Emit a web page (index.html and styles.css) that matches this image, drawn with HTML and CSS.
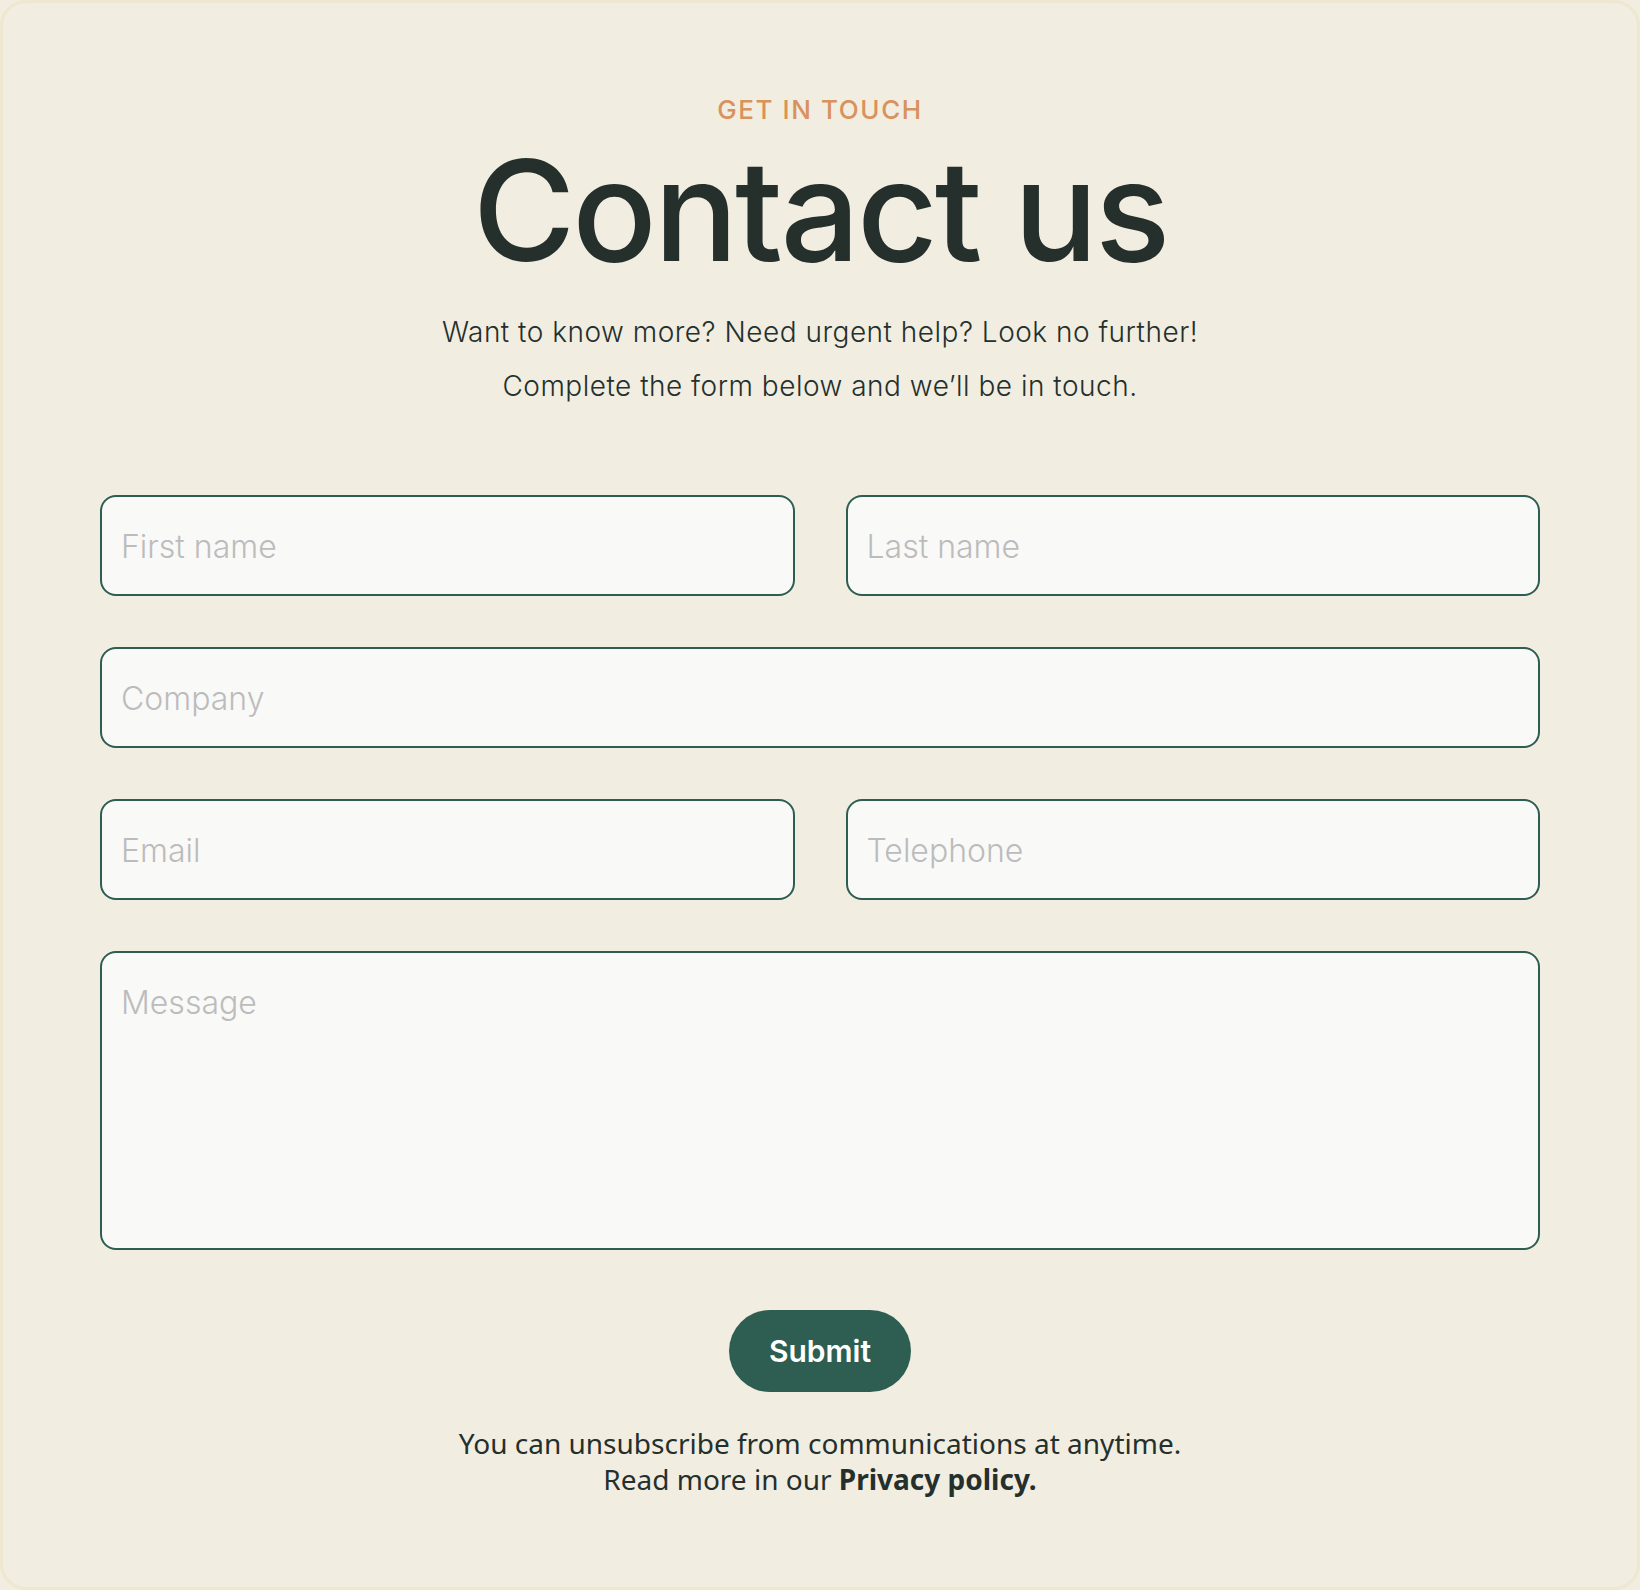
FILE: index.html
```html
<!DOCTYPE html>
<html lang="en">
<head>
<meta charset="utf-8">
<title>Contact us</title>
<link rel="stylesheet" href="styles.css">
</head>
<body>
<main class="card">
  <header class="intro">
    <p class="eyebrow">GET IN TOUCH</p>
    <h1 class="title">Contact us</h1>
    <p class="lead">Want to know more? Need urgent help? Look no further!<br>Complete the form below and we’ll be in touch.</p>
  </header>
  <form class="form">
    <div class="row two">
      <input class="field" type="text" placeholder="First name">
      <input class="field" type="text" placeholder="Last name">
    </div>
    <div class="row">
      <input class="field" type="text" placeholder="Company">
    </div>
    <div class="row two">
      <input class="field" type="email" placeholder="Email">
      <input class="field" type="tel" placeholder="Telephone">
    </div>
    <div class="row">
      <textarea class="field area" placeholder="Message"></textarea>
    </div>
    <div class="actions">
      <button class="submit" type="button">Submit</button>
    </div>
  </form>
  <p class="note">You can unsubscribe from communications at anytime.<br>Read more in our <strong>Privacy policy.</strong></p>
</main>
</body>
</html>
```

FILE: styles.css
```css
* { box-sizing: border-box; }

html, body {
  margin: 0;
  padding: 0;
  background: #f1ede1;
}

.card {
  width: 1640px;
  height: 1590px;
  background: #f1ede1;
  border: 3px solid #efe7d0;
  border-radius: 26px;
  padding: 91px 97px 0;
  display: flex;
  flex-direction: column;
  align-items: center;
  font-family: Inter, "Noto Sans", sans-serif;
  color: #25302d;
}

.intro {
  display: flex;
  flex-direction: column;
  align-items: center;
  text-align: center;
}

.eyebrow {
  margin: 0;
  font-size: 26px;
  line-height: 32px;
  font-weight: 500;
  letter-spacing: 1.6px;
  color: #d9915d;
}

.title {
  margin: 14px 0 0;
  font-size: 140px;
  line-height: 140px;
  font-weight: 500;
  letter-spacing: -3px;
  color: #25302d;
}

.lead {
  margin: 25px 0 0;
  font-size: 28px;
  line-height: 54px;
  font-weight: 350;
  letter-spacing: 0.5px;
  color: #25302d;
}

.form {
  width: 1440px;
  margin-top: 82px;
  display: flex;
  flex-direction: column;
  gap: 51px;
}

.row {
  display: flex;
  gap: 51px;
}

.row.two .field {
  flex: 1 1 0;
  min-width: 0;
}

.field {
  width: 100%;
  height: 101px;
  border: 2px solid #2e5e52;
  border-radius: 16px;
  background: #f9f9f8;
  padding: 2px 19px 0;
  font-family: Inter, "Noto Sans", sans-serif;
  font-size: 32px;
  font-weight: 350;
  color: #25302d;
  outline: none;
}

.field::placeholder {
  color: #bcbcbc;
  opacity: 1;
}

.area {
  height: 299px;
  padding: 30px 19px;
  line-height: 40px;
  resize: none;
  display: block;
}

.actions {
  display: flex;
  justify-content: center;
  margin-top: 9px;
}

.submit {
  width: 182px;
  height: 82px;
  border: none;
  border-radius: 41px;
  background: #2e5e52;
  color: #ffffff;
  font-family: Inter, "Noto Sans", sans-serif;
  font-size: 30px;
  font-weight: 600;
  cursor: pointer;
}

.note {
  margin: 33px 0 0;
  text-align: center;
  font-family: "Noto Sans", sans-serif;
  font-size: 28px;
  line-height: 36px;
  color: #25302d;
}

.note strong {
  font-weight: 700;
}
```
